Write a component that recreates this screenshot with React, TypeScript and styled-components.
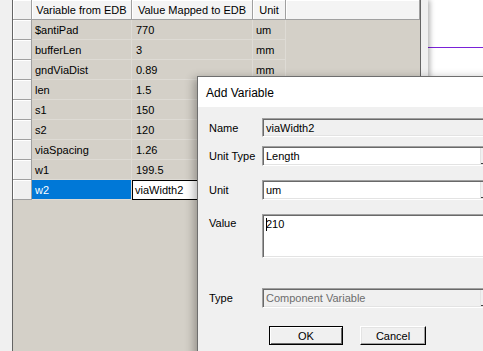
import styled, {createGlobalStyle} from "styled-components";

type VariableRow = {
    name: string
    value: string
    unit: string
}

// units of the rows under the dialog are not visible, so they stay empty
const variables: VariableRow[] = [
    {name: "$antiPad", value: "770", unit: "um"},
    {name: "bufferLen", value: "3", unit: "mm"},
    {name: "gndViaDist", value: "0.89", unit: "mm"},
    {name: "len", value: "1.5", unit: ""},
    {name: "s1", value: "150", unit: ""},
    {name: "s2", value: "120", unit: ""},
    {name: "viaSpacing", value: "1.26", unit: ""},
    {name: "w1", value: "199.5", unit: ""},
    {name: "w2", value: "viaWidth2", unit: ""},
]

const GlobalStyle = createGlobalStyle`
    html, body {
        margin: 0;
        padding: 0;
        background: #f0f0f0;
        overflow: hidden;
    }
    * {
        box-sizing: border-box;
    }
`

export default function App() {
    return (
        <Page>
            <GlobalStyle/>
            <GridWindow>
                <Grid>
                    <HeaderCell $corner/>
                    <HeaderCell>Variable from EDB</HeaderCell>
                    <HeaderCell>Value Mapped to EDB</HeaderCell>
                    <HeaderCell>Unit</HeaderCell>
                    <HeaderCell/>
                    {
                        variables.map((row) => {
                            const selected = row.name === "w2"
                            return (
                                <Row key={row.name}>
                                    <RowHeader/>
                                    <Cell $selected={selected}>{row.name}</Cell>
                                    {selected
                                        ? <EditCell>{row.value}</EditCell>
                                        : <Cell $pad={4}>{row.value}</Cell>}
                                    <Cell>{row.unit}</Cell>
                                    <EmptyCell/>
                                </Row>
                            )
                        })
                    }
                </Grid>
            </GridWindow>
            <SidePanel>
                <PurpleRule/>
            </SidePanel>

            <Dialog>
                <TitleBar>Add Variable</TitleBar>
                <DialogBody>
                    <FieldRow $gap={0}>
                        <Label>Name</Label>
                        <TextBox $disabled>viaWidth2</TextBox>
                    </FieldRow>
                    <FieldRow $gap={9}>
                        <Label>Unit Type</Label>
                        <Combo>
                            <ComboText>Length</ComboText>
                            <ComboArrow/>
                        </Combo>
                    </FieldRow>
                    <FieldRow $gap={14}>
                        <Label>Unit</Label>
                        <Combo>
                            <ComboText>um</ComboText>
                            <ComboArrow/>
                        </Combo>
                    </FieldRow>
                    <FieldRow $gap={14}>
                        <Label $top>Value</Label>
                        <TextArea><Caret/>210</TextArea>
                    </FieldRow>
                    <FieldRow $gap={30}>
                        <Label>Type</Label>
                        <Combo $disabled>
                            <ComboText>Component Variable</ComboText>
                            <ComboArrow/>
                        </Combo>
                    </FieldRow>
                    <ButtonRow>
                        <Button $default $width={74}>OK</Button>
                        <Button $width={66}>Cancel</Button>
                    </ButtonRow>
                </DialogBody>
            </Dialog>
        </Page>
    )
}

const Page = styled.div`
    position: relative;
    width: 483px;
    height: 351px;
    overflow: hidden;
    display: flex;
    font-family: "Liberation Sans", Arial, sans-serif;
    font-size: 11px;
    color: #000;
`

const GridWindow = styled.div`
    width: 428px;
    height: 100%;
    padding-left: 12px;
    background: #f0f0f0;
    box-shadow: 2px 0 5px rgba(0, 0, 0, 0.3);
    position: relative;
    z-index: 1;
`

const Grid = styled.div`
    width: 409px;
    height: 100%;
    display: grid;
    grid-template-columns: 19px 100px 121px 33px 134px;
    grid-auto-rows: 20px;
    align-content: start;
    background: #d4d0c8;
    border-left: 1px solid #646464;
    border-right: 1px solid #646464;
`

const HeaderCell = styled.div<{ $corner?: boolean }>`
    display: flex;
    align-items: center;
    justify-content: center;
    background: ${p => p.$corner ? "#f0f0f0" : "#f4f4f4"};
    border-right: 1px solid #a0a0a0;
    border-bottom: 1px solid #a0a0a0;
    box-shadow: inset 1px 1px 0 #fff;
    white-space: nowrap;
    overflow: hidden;
`

const Row = styled.div`
    display: contents;
`

const RowHeader = styled.div`
    background: #f0f0f0;
    border-right: 1px solid #a0a0a0;
    border-bottom: 1px solid #a0a0a0;
    box-shadow: inset 1px 1px 0 #fff;
`

const Cell = styled.div<{ $selected?: boolean, $pad?: number }>`
    display: flex;
    align-items: center;
    padding-left: ${p => p.$pad ?? 3}px;
    background: ${p => p.$selected ? "#0078d7" : "#d4d0c8"};
    color: ${p => p.$selected ? "#fff" : "#000"};
    border-right: 1px solid #dedbd5;
    border-bottom: 1px solid #dedbd5;
    white-space: nowrap;
    overflow: hidden;
`

const EditCell = styled.div`
    display: flex;
    align-items: center;
    padding-left: 2px;
    background: #fff;
    border: 1px solid #000;
    white-space: nowrap;
`

const EmptyCell = styled.div`
    background: #d4d0c8;
`

const SidePanel = styled.div`
    flex: 1;
    background: #fff;
    padding-top: 47px;
`

const PurpleRule = styled.div`
    height: 1px;
    background: #7a22d8;
`

const Dialog = styled.div`
    position: absolute;
    left: 197px;
    top: 76px;
    width: 320px;
    height: 300px;
    z-index: 2;
    background: #f0f0f0;
    border: 1px solid #6e6e6e;
    box-shadow: -3px 2px 9px rgba(0, 0, 0, 0.3);
    display: flex;
    flex-direction: column;
`

const TitleBar = styled.div`
    height: 30px;
    background: #fff;
    padding: 1px 0 0 8px;
    display: flex;
    align-items: center;
    font-size: 12px;
`

const DialogBody = styled.div`
    padding: 11px 0 0 11px;
    display: flex;
    flex-direction: column;
`

const FieldRow = styled.div<{ $gap: number }>`
    display: flex;
    align-items: stretch;
    margin-top: ${p => p.$gap}px;
`

const Label = styled.div<{ $top?: boolean }>`
    width: 53px;
    flex-shrink: 0;
    display: flex;
    align-items: ${p => p.$top ? "flex-start" : "center"};
    padding-top: ${p => p.$top ? 3 : 0}px;
`

const sunken = `
    border-style: solid;
    border-width: 1px;
    border-color: #a0a0a0 #fff #fff #a0a0a0;
    box-shadow: inset 1px 1px 0 #696969, inset -1px -1px 0 #e3e3e3;
`

const TextBox = styled.div<{ $disabled?: boolean }>`
    ${sunken}
    width: 240px;
    height: 19px;
    display: flex;
    align-items: center;
    padding-left: 3px;
    background: ${p => p.$disabled ? "#f0f0f0" : "#fff"};
`

const Combo = styled.div<{ $disabled?: boolean }>`
    ${sunken}
    width: 240px;
    height: 20px;
    display: flex;
    background: ${p => p.$disabled ? "#f0f0f0" : "#fff"};
    color: ${p => p.$disabled ? "#6d6d6d" : "#000"};
`

const ComboText = styled.div`
    width: 217px;
    display: flex;
    align-items: center;
    padding-left: 3px;
    white-space: nowrap;
`

const ComboArrow = styled.div`
    flex: 1;
    margin: 1px 0 1px 0;
    background: #f0f0f0;
    border-left: 1px solid #e3e3e3;
    box-shadow: inset 1px -2px 0 -1px #404040;
`

const TextArea = styled.div`
    ${sunken}
    width: 240px;
    height: 44px;
    background: #fff;
    padding: 3px 0 0 3px;
    line-height: 13px;
    display: flex;
    align-items: flex-start;
`

const Caret = styled.span`
    display: inline-block;
    width: 1px;
    height: 13px;
    background: #000;
    margin-right: -1px;
`

const ButtonRow = styled.div`
    display: flex;
    gap: 17px;
    margin: 18px 0 0 60px;
`

const Button = styled.div<{ $default?: boolean, $width: number }>`
    width: ${p => p.$width}px;
    height: 19px;
    display: flex;
    align-items: center;
    justify-content: center;
    background: #f0f0f0;
    border: 1px solid ${p => p.$default ? "#000" : "#fff"};
    border-right-color: #000;
    border-bottom-color: #000;
    box-shadow: ${p => p.$default
            ? "inset 1px 1px 0 #fff, inset -1px -1px 0 #696969"
            : "inset -1px -1px 0 #a0a0a0, inset 1px 1px 0 #e3e3e3"};
`
